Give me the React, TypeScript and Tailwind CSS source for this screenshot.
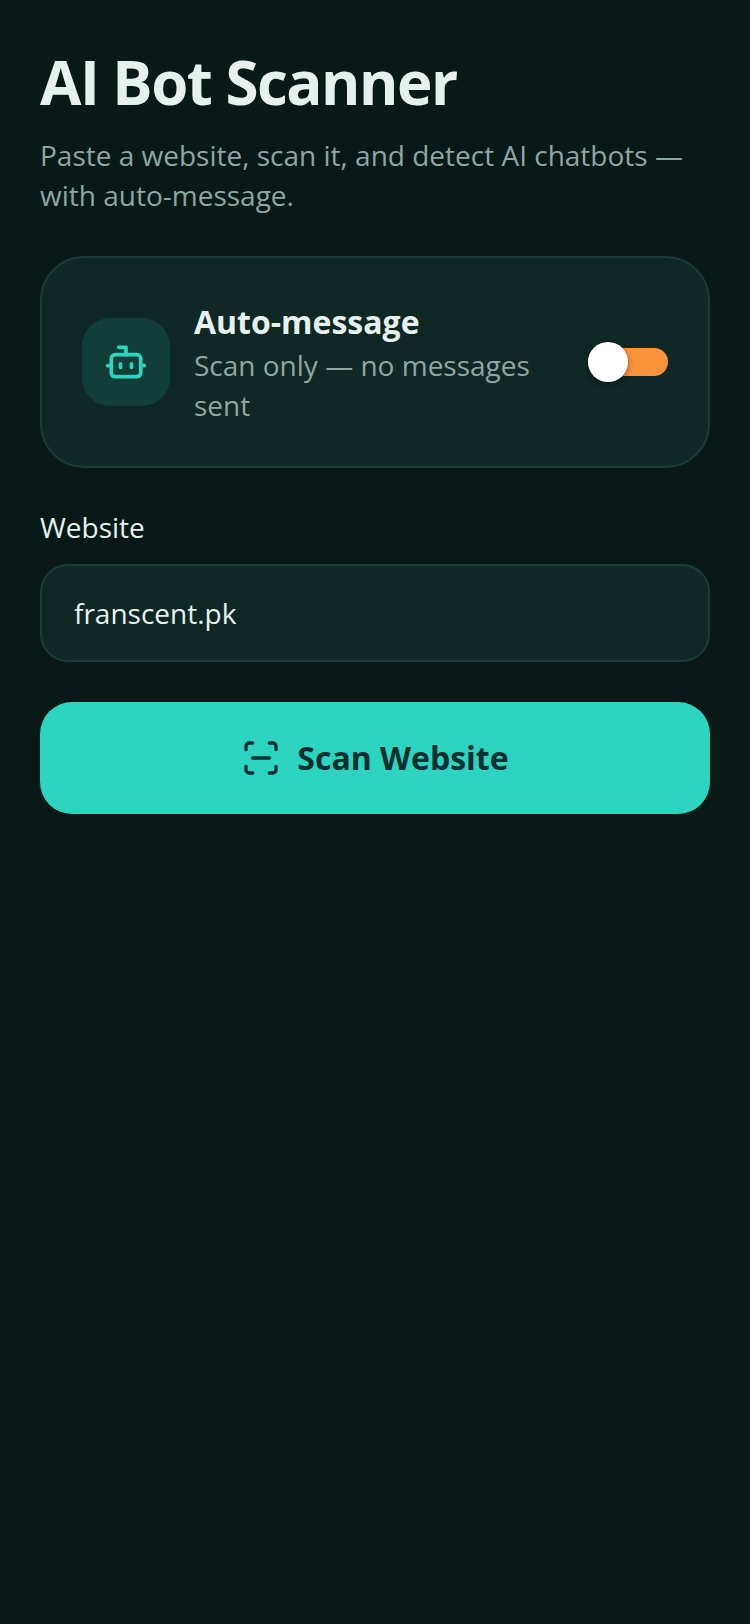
import React from 'react';

const BotIcon = () => (
  <svg className="h-11 w-11 text-[#2dd4bf]" viewBox="0 0 24 24" fill="none" stroke="currentColor" strokeWidth="2" strokeLinecap="round" strokeLinejoin="round">
    <path d="M12 8V4H8" />
    <rect width="16" height="12" x="4" y="8" rx="2" />
    <path d="M2 14h2" />
    <path d="M20 14h2" />
    <path d="M15 13v2" />
    <path d="M9 13v2" />
  </svg>
);

const ScanIcon = () => (
  <svg className="h-10 w-10 text-[#062f2d]" viewBox="0 0 24 24" fill="none" stroke="currentColor" strokeWidth="2" strokeLinecap="round" strokeLinejoin="round">
    <path d="M3 7V5a2 2 0 0 1 2-2h2" />
    <path d="M17 3h2a2 2 0 0 1 2 2v2" />
    <path d="M21 17v2a2 2 0 0 1-2 2h-2" />
    <path d="M7 21H5a2 2 0 0 1-2-2v-2" />
    <path d="M7 12h10" />
  </svg>
);

export default function App() {
  return (
    <div className="min-h-[1624px] bg-[#091918] px-10 pt-[43px] font-['Open_Sans',sans-serif]">
      <h1 className="text-[60px] leading-[78px] font-bold tracking-[-1.5px] text-[#e6f1ee]">AI Bot Scanner</h1>
      <p className="mt-[14px] text-[28px] leading-10 text-[#8fa6a2]">
        Paste a website, scan it, and detect AI chatbots — with auto-message.
      </p>

      <div className="mt-[41px] flex h-[212px] items-center gap-6 rounded-[44px] border-2 border-[#1a3b37] bg-[#0f2725] px-10">
        <div className="flex h-[88px] w-[88px] shrink-0 items-center justify-center rounded-[28px] bg-[#113e39]">
          <BotIcon />
        </div>
        <div className="min-w-0 flex-1">
          <div className="text-[32px] leading-[44px] font-bold text-[#e6f1ee]">Auto-message</div>
          <div className="mt-px text-[28px] leading-10 text-[#8fa6a2]">Scan only — no messages sent</div>
        </div>
        <div className="relative ml-6 h-7 w-20 shrink-0 rounded-full bg-[#fb923c]">
          <span className="absolute top-[-6px] left-0 h-10 w-10 rounded-full bg-white shadow-[0_2px_6px_rgba(0,0,0,0.4)]" />
        </div>
      </div>

      <div className="mt-[39px] text-[28px] leading-10 text-[#e6f1ee]">Website</div>
      <div className="mt-[17px] flex h-[98px] items-center rounded-[28px] border-2 border-[#1a3b37] bg-[#0f2725] px-8 text-[28px] text-[#e6f1ee]">
        franscent.pk
      </div>

      <button className="mt-10 flex h-28 w-full items-center justify-center gap-4 rounded-[32px] bg-[#2dd4bf] text-[32px] font-bold text-[#062f2d]">
        <ScanIcon />
        Scan Website
      </button>
    </div>
  );
}
